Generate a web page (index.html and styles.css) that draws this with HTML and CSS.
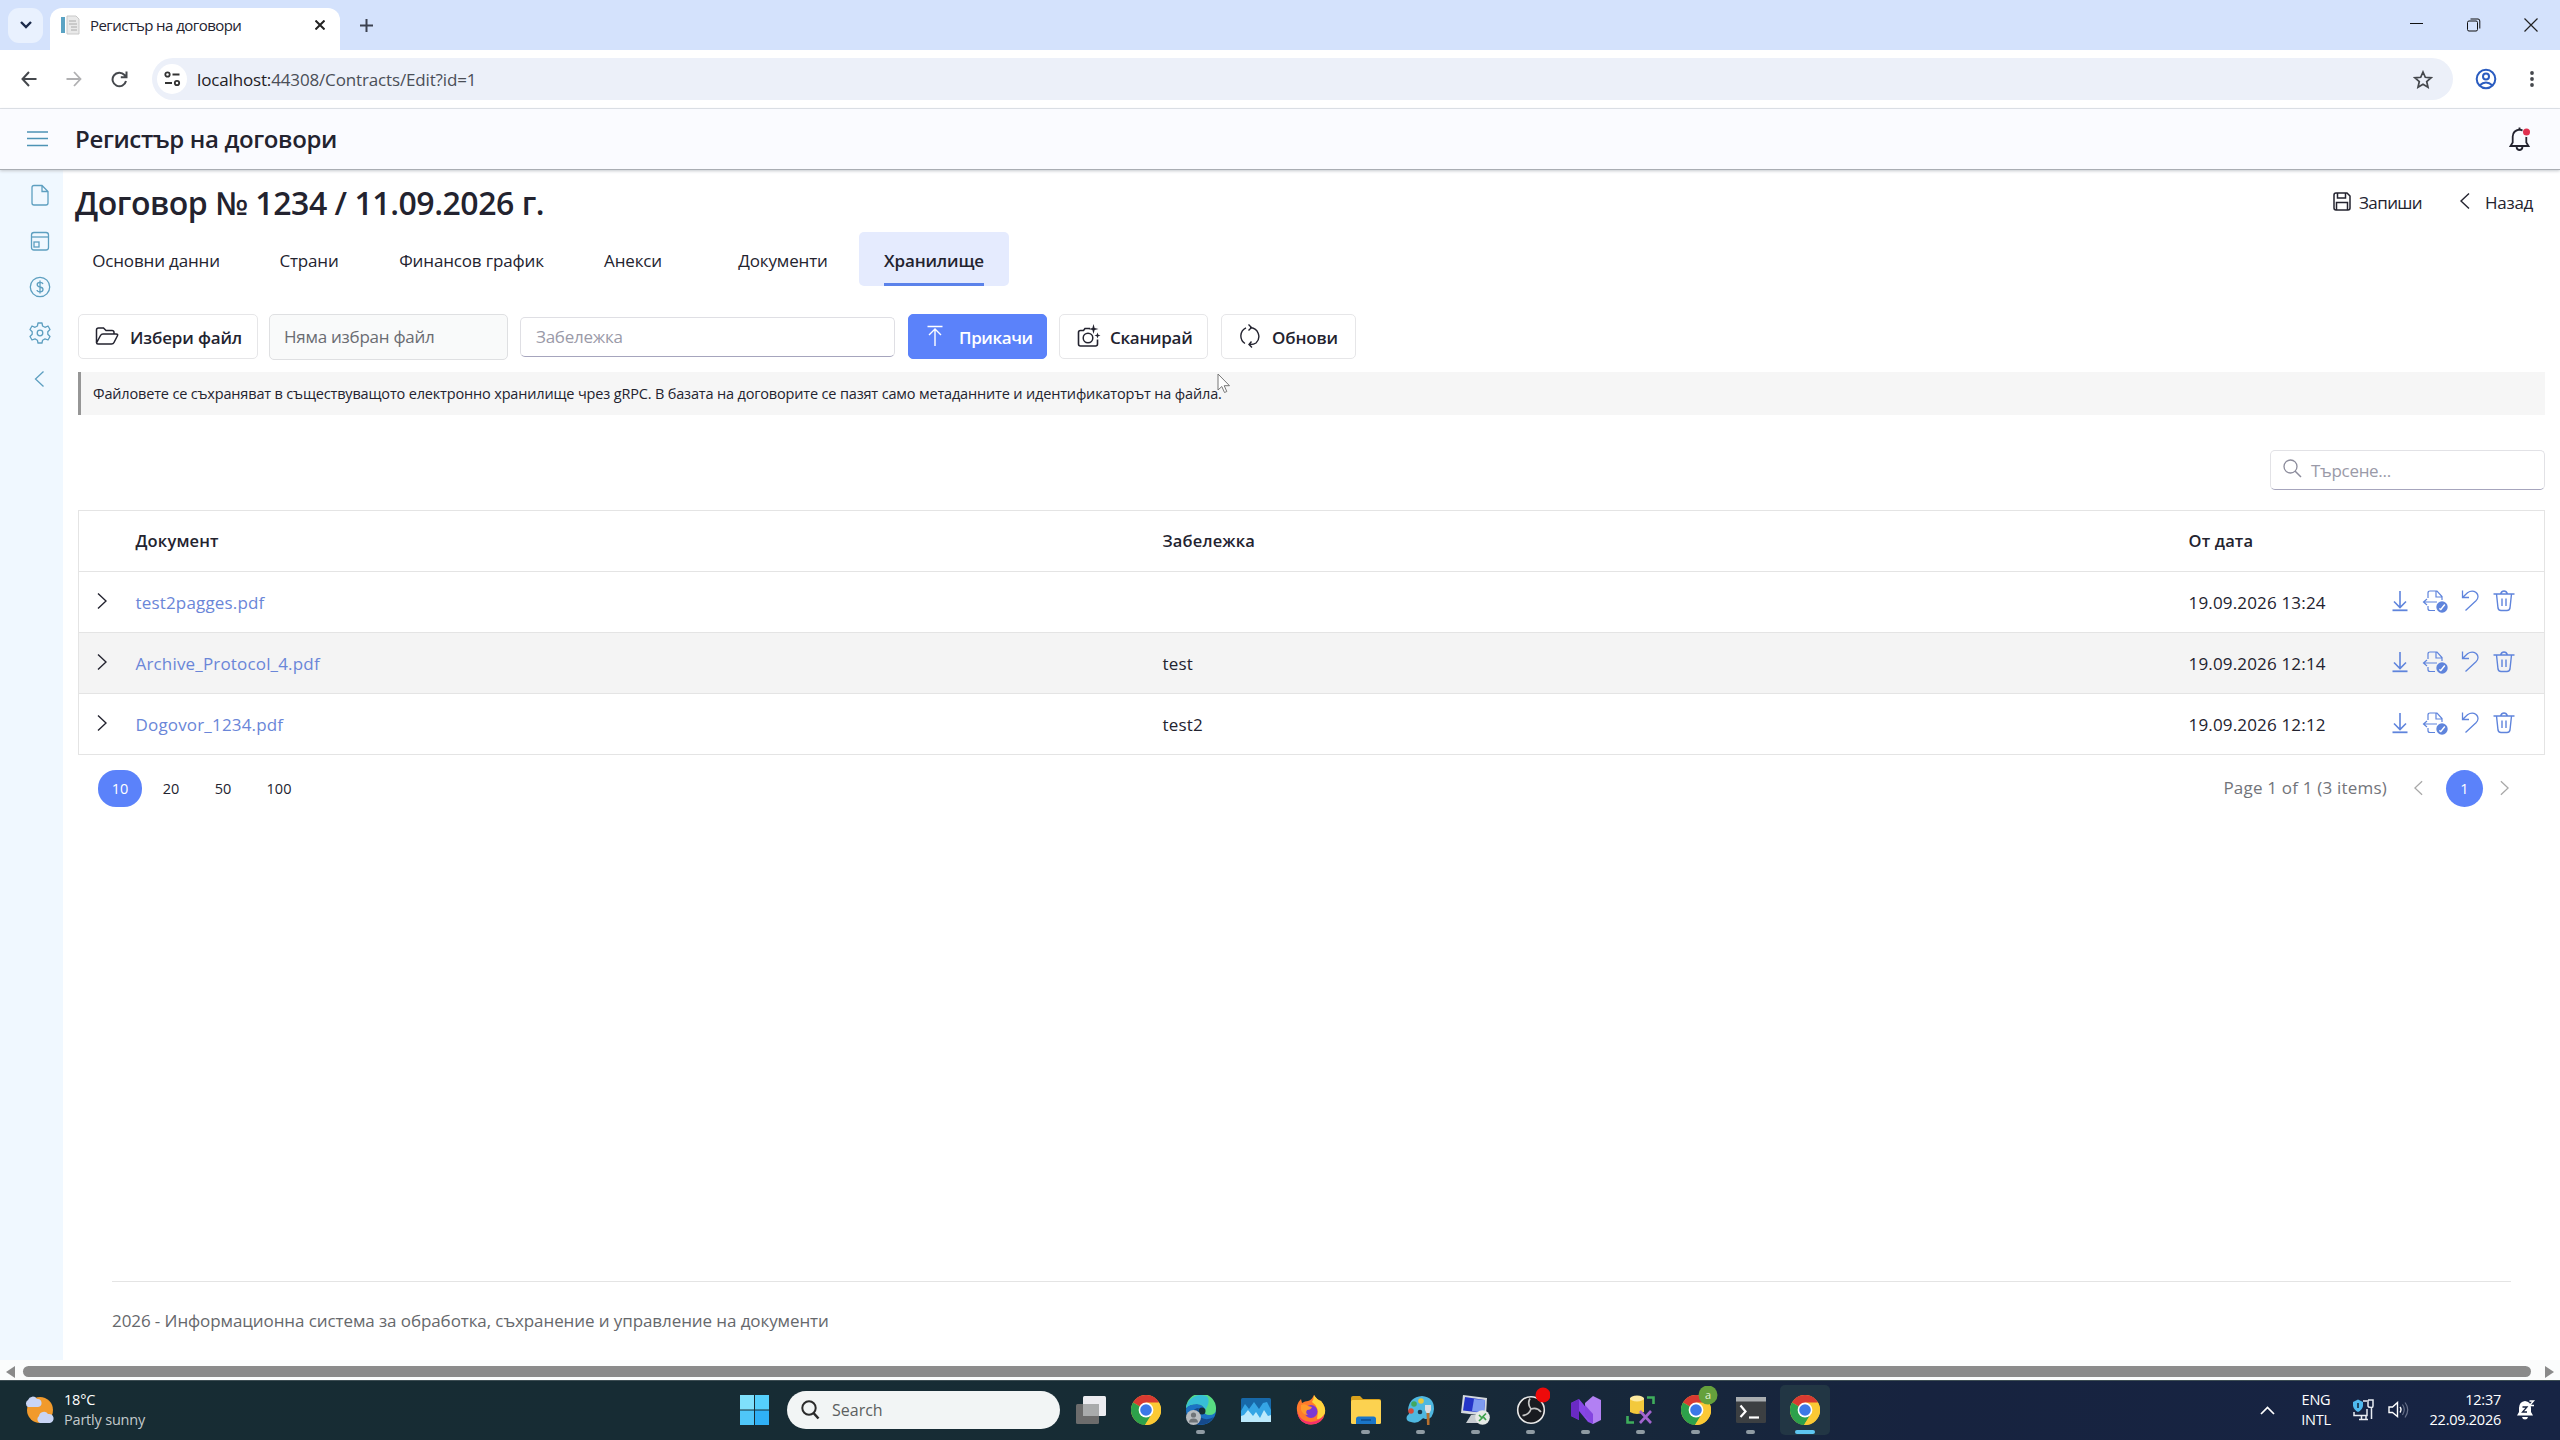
FILE: index.html
```html
<!DOCTYPE html>
<html lang="bg">
    <head>
        <meta charset="utf-8">
        <title>Регистър на договори</title>
        <link rel="stylesheet" href="styles.css">
    </head>
    <body>
        <!-- shared icons -->
        <svg class="sprite">
            <symbol id="i-chrome" viewBox="0 0 30 30">
                <circle cx="15" cy="15" r="15" fill="#fbc934"/>
                <path d="M15 15 L2 7.5 A15 15 0 0 1 28 7.5 Z" fill="#d93a31"/>
                <path d="M15 15 L2 7.5 A15 15 0 0 0 14 30 L21 18.5 Z" fill="#2da14b"/>
                <path d="M15 7.5 H28 A15 15 0 0 1 14 30 L21.5 18.5 Z" fill="#fbc934"/>
                <circle cx="15" cy="15" r="7.4" fill="#fff"/>
                <circle cx="15" cy="15" r="5.8" fill="#3b78e7"/>
            </symbol>
            <symbol id="i-down" viewBox="0 0 24 24">
                <path d="M12 2 V18 M6 12.5 L12 18.5 L18 12.5" fill="none" stroke="currentColor" stroke-width="1.6"/>
                <path d="M4.5 21.3 H19.5" stroke="currentColor" stroke-width="1.8"/>
            </symbol>
            <symbol id="i-sign" viewBox="0 0 26 24">
                <path d="M6 9 V4 Q6 2 8 2 H15 L20 7.5 V11 M14 2 V8 H20 M6 17 V19.500 Q6 21.500 8 21.500 H13 M1.500 13 H15 M5 10 L1.500 13 L5 16" fill="none" stroke="currentColor" stroke-width="1.200"/>
                <circle cx="20" cy="18" r="5.700" fill="currentColor"/>
                <path d="M17.300 19.500 L18.800 20.500 L22.800 15.500" fill="none" stroke="#fff" stroke-width="1.400"/>
            </symbol>
            <symbol id="i-undo" viewBox="0 0 24 24">
                <path d="M4.500 1.500 V8.500 H11 M4.500 8.500 L9.500 3.700 Q12.500 1.500 16 2.300 Q20 3.800 20 7.800 Q19.800 10 18 11.800 L7.500 21.500" fill="none" stroke="currentColor" stroke-width="1.300"/>
            </symbol>
            <symbol id="i-trash" viewBox="0 0 24 24">
                <path d="M1.500 5 H22.500 M8.500 5 Q9.500 2 12 2 Q14.500 2 15.500 5 M4.500 5 L6 19 Q6.500 21.500 9 21.500 H15 Q17.500 21.500 18 19 L19.500 5 M10 9.500 V17 M14 9.500 V17" fill="none" stroke="currentColor" stroke-width="1.400"/>
            </symbol>
            <symbol id="i-right" viewBox="0 0 10 16">
                <path d="M1 0.500 L9 8 L1 15.500" fill="none" stroke="currentColor" stroke-width="1.400"/>
            </symbol>
            <symbol id="i-left" viewBox="0 0 10 16">
                <path d="M9 0.500 L1 8 L9 15.500" fill="none" stroke="currentColor" stroke-width="1.400"/>
            </symbol>
        </svg>

        <div class="tabstrip">
            <div class="tab-search">
                <svg width="12" height="8" viewBox="0 0 12 8"><path d="M1 1 L6 6 L11 1" fill="none" stroke="#1b2a4a" stroke-width="2.4"/></svg>
            </div>
            <div class="browser-tab">
                <svg width="19" height="20" viewBox="0 0 19 20">
                    <path d="M0 2 H4 V18 H0 Z" fill="#5aa3c4"/>
                    <path d="M6 1 H15 L18 4 V19 H6 Z" fill="#e9e9e9" stroke="#c9c9c9"/>
                    <path d="M8 6 H15 M8 9 H16 M10 12 H16 M10 15 H16" stroke="#aaa"/>
                </svg>
                <span class="browser-tab-title">Регистър на договори</span>
                <svg class="tab-close" width="10" height="10" viewBox="0 0 10 10"><path d="M0.500 0.500 L9.500 9.500 M9.500 0.500 L0.500 9.500" stroke="#222" stroke-width="2"/></svg>
            </div>
            <svg class="new-tab" width="13" height="13" viewBox="0 0 13 13"><path d="M6.500 0 V13 M0 6.500 H13" stroke="#3c4250" stroke-width="2"/></svg>
            <div class="window-buttons">
                <svg width="14" height="14" viewBox="0 0 14 14"><path d="M0 5.500 H13" stroke="#111"/></svg>
                <svg width="14" height="14" viewBox="0 0 14 14"><rect x="0.500" y="3" width="10" height="10" rx="1.500" fill="none" stroke="#111"/><path d="M3.500 1 H11 Q12.800 1 12.800 3 V10.500" fill="none" stroke="#111"/></svg>
                <svg width="14" height="14" viewBox="0 0 14 14"><path d="M0.500 0.500 L13.500 13.500 M13.500 0.500 L0.500 13.500" stroke="#222" stroke-width="1.200"/></svg>
            </div>
        </div>

        <div class="addressbar">
            <div class="nav-buttons">
                <svg width="16" height="16" viewBox="0 0 16 16"><path d="M15.500 8 H1.500 M8 1 L1.500 8 L8 15" fill="none" stroke="#45484d" stroke-width="2"/></svg>
                <svg width="16" height="16" viewBox="0 0 16 16"><path d="M0.500 8 H14.500 M8 1 L14.500 8 L8 15" fill="none" stroke="#b0b0b2" stroke-width="1.800"/></svg>
                <svg width="17" height="17" viewBox="0 0 17 17"><path d="M15 10 A6.800 6.800 0 1 1 13.500 4 L15.500 6 M15.500 0.500 V6.300 H9.800" fill="none" stroke="#45484d" stroke-width="2"/></svg>
            </div>
            <div class="omnibox">
                <div class="site-info">
                    <svg width="17" height="16" viewBox="0 0 17 16"><circle cx="3.500" cy="3.500" r="2.200" fill="none" stroke="#333" stroke-width="1.800"/><path d="M8.500 3.500 H15.500 M1 12 H8" stroke="#333" stroke-width="2"/><circle cx="13" cy="12" r="2.200" fill="none" stroke="#333" stroke-width="1.800"/></svg>
                </div>
                <span class="url"><span class="url-host">localhost:</span>44308/Contracts/Edit?id=1</span>
                <svg class="star" width="20" height="19" viewBox="0 0 20 19"><path d="M10 2 L12.300 7.300 L18 7.800 L13.700 11.500 L15 17.200 L10 14.200 L5 17.200 L6.300 11.500 L2 7.800 L7.700 7.300 Z" fill="none" stroke="#45484d" stroke-width="1.700"/></svg>
            </div>
            <svg class="account" width="22" height="22" viewBox="0 0 22 22"><circle cx="11" cy="11" r="9.300" fill="none" stroke="#2a5cc0" stroke-width="2"/><circle cx="11" cy="8.500" r="3" fill="none" stroke="#2a5cc0" stroke-width="2"/><path d="M4.500 17.500 Q11 11.500 17.500 17.500" fill="none" stroke="#2a5cc0" stroke-width="2"/></svg>
            <svg width="4" height="16" viewBox="0 0 4 16"><circle cx="2" cy="2" r="1.900" fill="#45484d"/><circle cx="2" cy="8" r="1.900" fill="#45484d"/><circle cx="2" cy="14" r="1.900" fill="#45484d"/></svg>
        </div>

        <header class="app-header">
            <svg width="21" height="16" viewBox="0 0 21 16"><path d="M0 1 H21 M0 7.500 H21 M0 14.500 H21" stroke="#4d93b5" stroke-width="1.500"/></svg>
            <span class="app-title">Регистър на договори</span>
            <svg class="bell" width="22" height="25" viewBox="0 0 22 25">
                <path d="M1.500 19 H19.500 L17.300 15.500 V9.500 Q17 3.500 10.500 2.500 Q4 3.500 3.700 9.500 V15.500 Z M7.500 20 Q8 23 10.500 23 Q13 23 13.500 20 M10.500 0.500 V3" fill="none" stroke="#23232f" stroke-width="1.800"/>
                <circle cx="17.500" cy="5.500" r="4.500" fill="#fafbff"/>
                <circle cx="17.500" cy="5" r="3.500" fill="#e0304e"/>
            </svg>
        </header>

        <div class="app-body">
            <nav class="sidebar">
                <svg width="24" height="24" viewBox="0 0 24 24"><path d="M6 2.500 H14 L20 8.500 V20 Q20 22 18 22 H6 Q4 22 4 20 V4.500 Q4 2.500 6 2.500 Z M14 2.500 V8.500 H20"/></svg>
                <svg width="24" height="24" viewBox="0 0 24 24"><rect x="3.500" y="3.500" width="17" height="17.500" rx="2.500"/><path d="M3.500 8 H20.500"/><rect x="6" y="13" width="5" height="5"/></svg>
                <svg width="24" height="24" viewBox="0 0 24 24"><circle cx="12" cy="12" r="9.700"/><path d="M12 5.500 V18.500 M15 9 Q14.500 7.300 12 7.300 Q9.200 7.300 9.200 9.500 Q9.200 11.500 12 12 Q15 12.500 15 14.500 Q15 16.800 12 16.800 Q9.300 16.800 9 15"/></svg>
                <svg width="24" height="24" viewBox="0 0 24 24"><path d="M10 2 H14 L14.600 5 L17 6.300 L20 5 L22 8.500 L19.800 10.700 V13.300 L22 15.500 L20 19 L17 17.900 L14.600 19.200 L14 22 H10 L9.400 19.200 L7 17.900 L4 19 L2 15.500 L4.200 13.300 V10.700 L2 8.500 L4 5 L7 6.300 L9.400 5 Z" stroke-linejoin="round"/><circle cx="12" cy="12" r="2.800"/></svg>
                <svg width="24" height="24" viewBox="0 0 24 24"><path d="M15.500 4.500 L7.500 12 L15.500 19.500"/></svg>
            </nav>

            <main class="content">
                <div class="title-row">
                    <h1>Договор № 1234 / 11.09.2026 г.</h1>
                    <div class="title-actions">
                        <svg width="18" height="19" viewBox="0 0 18 19"><path d="M1 3 Q1 1 3 1 H14 L17 4 V16 Q17 18 15 18 H3 Q1 18 1 16 Z M4.500 1 V6 H12.500 V1 M3.500 18 V10.500 H14.500 V18" fill="none" stroke="#23232f" stroke-width="1.500"/></svg>
                        <span class="save">Запиши</span>
                        <svg class="back-icon" width="10" height="16"><use href="#i-left"/></svg>
                        <span class="back">Назад</span>
                    </div>
                </div>

                <div class="tabs">
                    <div class="tab tab-main">Основни данни</div>
                    <div class="tab tab-parties">Страни</div>
                    <div class="tab tab-finance">Финансов график</div>
                    <div class="tab tab-annex">Анекси</div>
                    <div class="tab tab-docs">Документи</div>
                    <div class="tab active"><span>Хранилище</span></div>
                </div>

                <div class="toolbar">
                    <div class="btn btn-choose">
                        <svg width="24" height="20" viewBox="0 0 24 20"><path d="M1.500 17 V4 Q1.500 2 3.500 2 H8.500 L11 4.500 H17 Q19 4.500 19 6.500 V8 M1.500 17 L5.500 9.500 Q6.300 8 8 8 H21 Q23.500 8 22.300 10 L19 16.500 Q18.300 18 16.500 18 H3 Q1.500 18 1.500 16.500" fill="none" stroke="currentColor" stroke-width="1.500"/></svg>
                        <span>Избери файл</span>
                    </div>
                    <div class="file-name">Няма избран файл</div>
                    <div class="note-input">Забележка</div>
                    <div class="btn btn-primary">
                        <svg width="16" height="22" viewBox="0 0 16 22"><path d="M0.500 1.500 H15.500 M8 21 V4 M2 10 L8 4 L14 10" fill="none" stroke="currentColor" stroke-width="1.400"/></svg>
                        <span>Прикачи</span>
                    </div>
                    <div class="btn btn-scan">
                        <svg width="24" height="24" viewBox="0 0 24 24"><path d="M13 4.500 H8 L6.500 6.500 H3.500 Q1.500 6.500 1.500 8.500 V20 Q1.500 22 3.500 22 H18.500 Q20.500 22 20.500 20 V15.500" fill="none" stroke="currentColor" stroke-width="1.600"/><circle cx="11" cy="14" r="4.800" fill="none" stroke="currentColor" stroke-width="1.500"/><path d="M16.500 0 L17.600 3.900 L21.500 5 L17.600 6.100 L16.500 10 L15.400 6.100 L11.500 5 L15.400 3.900 Z M20.500 8.500 L21.300 10.700 L23.500 11.500 L21.300 12.300 L20.500 14.500 L19.700 12.300 L17.500 11.500 L19.700 10.700 Z" fill="currentColor"/></svg>
                        <span>Сканирай</span>
                    </div>
                    <div class="btn btn-refresh">
                        <svg width="22" height="24" viewBox="0 0 22 24"><path d="M7 3.800 A9 9 0 0 0 6 19.500 M11 3.500 A9 9 0 0 1 17 19 M11 3.500 H12 M9.500 0.500 L12.500 3.500 L9.500 6.500 M12.500 17.500 L10 20.500 L13 23.500 M10 20.500 Q14.500 20.800 17 19" fill="none" stroke="currentColor" stroke-width="1.400"/></svg>
                        <span>Обнови</span>
                    </div>
                </div>

                <div class="notice"><span>Файловете се съхраняват в съществуващото електронно хранилище чрез gRPC. В базата на договорите се пазят само метаданните и идентификаторът на файла.</span></div>

                <div class="search-row">
                    <div class="search-box">
                        <svg width="19" height="19" viewBox="0 0 19 19"><circle cx="7.500" cy="7.500" r="6.500" fill="none" stroke="#8c8c9c" stroke-width="1.300"/><path d="M12 12 L18 18" stroke="#8c8c9c" stroke-width="1.500"/></svg>
                        <span>Търсене...</span>
                    </div>
                </div>

                <table class="grid">
                    <colgroup>
                        <col class="col-expand">
                        <col class="col-doc">
                        <col class="col-note">
                        <col class="col-date">
                        <col>
                    </colgroup>
                    <tr>
                        <th></th>
                        <th>Документ</th>
                        <th>Забележка</th>
                        <th>От дата</th>
                        <th></th>
                    </tr>
                    <tr>
                        <td class="expand"><svg width="10" height="16"><use href="#i-right"/></svg></td>
                        <td><a>test2pagges.pdf</a></td>
                        <td></td>
                        <td>19.09.2026 13:24</td>
                        <td>
                            <div class="row-actions">
                                <svg width="24" height="24"><use href="#i-down"/></svg>
                                <svg width="26" height="24"><use href="#i-sign"/></svg>
                                <svg width="24" height="24"><use href="#i-undo"/></svg>
                                <svg width="24" height="24"><use href="#i-trash"/></svg>
                            </div>
                        </td>
                    </tr>
                    <tr class="alt">
                        <td class="expand"><svg width="10" height="16"><use href="#i-right"/></svg></td>
                        <td><a>Archive_Protocol_4.pdf</a></td>
                        <td>test</td>
                        <td>19.09.2026 12:14</td>
                        <td>
                            <div class="row-actions">
                                <svg width="24" height="24"><use href="#i-down"/></svg>
                                <svg width="26" height="24"><use href="#i-sign"/></svg>
                                <svg width="24" height="24"><use href="#i-undo"/></svg>
                                <svg width="24" height="24"><use href="#i-trash"/></svg>
                            </div>
                        </td>
                    </tr>
                    <tr>
                        <td class="expand"><svg width="10" height="16"><use href="#i-right"/></svg></td>
                        <td><a>Dogovor_1234.pdf</a></td>
                        <td>test2</td>
                        <td>19.09.2026 12:12</td>
                        <td>
                            <div class="row-actions">
                                <svg width="24" height="24"><use href="#i-down"/></svg>
                                <svg width="26" height="24"><use href="#i-sign"/></svg>
                                <svg width="24" height="24"><use href="#i-undo"/></svg>
                                <svg width="24" height="24"><use href="#i-trash"/></svg>
                            </div>
                        </td>
                    </tr>
                </table>

                <div class="pager">
                    <span class="size selected">10</span>
                    <span class="size">20</span>
                    <span class="size">50</span>
                    <span class="size size-wide">100</span>
                    <span class="page-info">Page 1 of 1 (3 items)</span>
                    <svg class="pager-arrow" width="9" height="16"><use href="#i-left"/></svg>
                    <span class="page-number">1</span>
                    <svg class="pager-arrow" width="9" height="16"><use href="#i-right"/></svg>
                </div>

                <footer class="footer"><span>2026 - Информационна система за обработка, съхранение и управление на документи</span></footer>
            </main>
        </div>

        <div class="scrollbar">
            <svg width="9" height="12" viewBox="0 0 9 12"><path d="M9 0 V12 L0 6 Z" fill="#8a8a8a"/></svg>
            <div class="thumb"></div>
            <svg width="9" height="12" viewBox="0 0 9 12"><path d="M0 0 V12 L9 6 Z" fill="#8a8a8a"/></svg>
        </div>

        <div class="taskbar">
            <div class="weather">
                <svg width="31" height="30" viewBox="0 0 31 30">
                    <circle cx="16" cy="15" r="13" fill="#f19a2c"/>
                    <path d="M4 12 A4 4 0 0 1 4 5 A5 5 0 0 1 13 4 A4 4 0 0 1 14 12 Z" fill="#c9d5f5"/>
                    <path d="M16 28 A4 4 0 0 1 15 21 A5 5 0 0 1 24 19 A4.500 4.500 0 0 1 26 28 Z" fill="#c9d5f5"/>
                </svg>
                <div class="weather-text">
                    <div>18°C</div>
                    <div class="dim">Partly sunny</div>
                </div>
            </div>
            <svg class="start" width="29" height="30" viewBox="0 0 29 30">
                <rect x="0" y="0" width="14" height="14.500" fill="#7fe0fb"/>
                <rect x="15" y="0" width="14" height="14.500" fill="#55cffb"/>
                <rect x="0" y="15.500" width="14" height="14.500" fill="#4fc6f8"/>
                <rect x="15" y="15.500" width="14" height="14.500" fill="#2fb0f5"/>
            </svg>
            <div class="task-search">
                <svg width="19" height="20" viewBox="0 0 19 20"><circle cx="8" cy="8" r="6.700" fill="none" stroke="#2b2b2b" stroke-width="2"/><path d="M12.500 13 L17.500 18.500" stroke="#2b2b2b" stroke-width="2.600"/></svg>
                <span>Search</span>
            </div>
            <div class="apps">
                <div class="app">
                    <svg width="30" height="30" viewBox="0 0 30 30"><rect x="7" y="1" width="23" height="20" rx="1.500" fill="#ececf0"/><rect x="0" y="9" width="23" height="20" rx="1.500" fill="#6c6c6c"/><rect x="7" y="9" width="16" height="12" fill="#a9abac"/></svg>
                </div>
                <div class="app"><svg width="30" height="30"><use href="#i-chrome"/></svg></div>
                <div class="app running">
                    <svg width="30" height="30" viewBox="0 0 30 30">
                        <circle cx="15" cy="15" r="15" fill="#1c73c4"/>
                        <path d="M0 13 A15 15 0 0 1 30 14 Q30 20 23 20 Q17 19.500 19 15.500 Q18 9 11 9 Q3 9 0 13 Z" fill="#58dc82"/>
                        <path d="M0 13 A15 15 0 0 1 21 1.300 Q25 7 19 15 Q18 9 11 9 Q3 9 0 13 Z" fill="#37bfd6"/>
                        <path d="M13 13 Q10 19 15 22.500 Q21 26 28 22 Q22 31 12 29.500 Q5 26 6 18 Q8 13 13 13 Z" fill="#154a8c"/>
                        <circle cx="16" cy="16" r="3.500" fill="#162c36"/>
                        <circle cx="7.500" cy="22.500" r="7.500" fill="#b7bcc0"/>
                        <circle cx="7.500" cy="20" r="2.600" fill="#6f7478"/><path d="M3 27.500 Q3 23.500 7.500 23.500 Q12 23.500 12 27.500 Z" fill="#6f7478"/>
                    </svg>
                </div>
                <div class="app">
                    <svg width="30" height="24" viewBox="0 0 30 24"><rect width="30" height="24" rx="1.500" fill="#1768a8"/><path d="M0 13 L4 6 L8 11 L13 4 L18 11 L22 5 L26 4 L30 12 V24 H0 Z" fill="#35a5e5"/><path d="M0 18 L3 17 L7 12 L12 18 L15 14 L19 20 L23 12 L27 18 L30 17 V24 H0 Z" fill="#bce9fb"/></svg>
                </div>
                <div class="app">
                    <svg width="30" height="30" viewBox="0 0 30 30"><path d="M1 16 Q0 9 5 4 L6 8 Q9 6 12 6 Q16 5 18 0 Q21 5 25 6 Q30 12 29 18 Q27 29 15 29.500 Q3 29 1 16 Z" fill="#ff7a2c"/><path d="M18 0 Q21 5 25 6 Q30 12 29 18 Q26 24 21 24 Q24 12 16 7 Q18 4 18 0 Z" fill="#ffd53d"/><path d="M1 16 Q4 27 15 27 Q24 26 28 20 Q26 29 15 29.500 Q3 29 1 16 Z" fill="#f5306b"/><circle cx="15" cy="16.500" r="6.500" fill="#7b3ad4"/><path d="M5 10 Q9 8 12 11 L16 12 Q15 15 11 15 Q9 18 12 20 Q7 20 5 15 Z" fill="#ff9a2c"/></svg>
                </div>
                <div class="app running">
                    <svg width="30" height="28" viewBox="0 0 30 28"><path d="M0 2 Q0 0 2 0 H9 L12 3 H28 Q30 3 30 5 V12 H0 Z" fill="#d9a11c"/><rect y="4" width="30" height="24" rx="1.500" fill="#fcd250"/><path d="M5 28 V23 Q5 20.500 7.500 20.500 H22.500 Q25 20.500 25 23 V28 Z" fill="#1a76c8"/><path d="M10 24 H20" stroke="#0e4d8c" stroke-width="1.500"/></svg>
                </div>
                <div class="app running">
                    <svg width="29" height="30" viewBox="0 0 29 30"><path d="M1 21 Q-1 26 5 27 Q11 29 15 25 Q17 22 19 24 Q27 25 28 14 Q28 2 16 1 Q3 2 2 15 Q5 18 1 21 Z" fill="#4fb8e0"/><circle cx="8" cy="9" r="2.800" fill="#41a85f"/><circle cx="15" cy="6" r="2.800" fill="#e9c93b"/><circle cx="5" cy="16" r="2.800" fill="#d54a3a"/><circle cx="14" cy="17" r="2.300" fill="#1a3a50"/><path d="M19 10 H25 V15 L23.500 18 H20.500 L19 15 Z" fill="#dadde0"/><path d="M20.500 18 H23.500 V30 H21 Z" fill="#b5702f"/></svg>
                </div>
                <div class="app running">
                    <svg width="29" height="30" viewBox="0 0 29 30"><path d="M2 0 L26 3 L25 21 L0 18 Z" fill="#d3d8de"/><path d="M4 2 L24 5 L23 18 L2 15.500 Z" fill="#2434c8"/><path d="M13 4 L24 5 L23 18 L11 16 Z" fill="#7d9bf0"/><path d="M10 20 H17 L19 28 H5 Z" fill="#c7ccd1"/><circle cx="21.500" cy="22.500" r="7.300" fill="#e6e9e6"/><path d="M18 20 L21 23 L18 26 M25 18.500 L22 21.500 L25 25" fill="none" stroke="#3fa34d" stroke-width="1.700"/></svg>
                </div>
                <div class="app running">
                    <svg class="obs" width="34" height="38" viewBox="0 0 34 38"><circle cx="15" cy="23" r="13.300" fill="#191b20" stroke="#e8e8e8" stroke-width="1.600"/><path d="M15 22 Q11 17 14 11.500 M15 22 Q21 20 25 25 M15 22 Q13 28 6.500 28.500" fill="none" stroke="#c4c4c4" stroke-width="1.700"/><circle cx="27" cy="8" r="7.500" fill="#ee0a0a"/></svg>
                </div>
                <div class="app running">
                    <svg width="30" height="28" viewBox="0 0 30 28"><path d="M0 7 L8 3 L22 20 V28 L17 26 L8 15 V24 L0 20 Z" fill="#8746e6"/><path d="M0 7 L8 3 V24 L0 20 Z" fill="#6a2ac4"/><path d="M22 0 L30 4 V24 L22 28 L14 21 V7 Z" fill="#b280f3"/><path d="M14 9 L22 18 V28 L14 21 Z" fill="#8444e0"/></svg>
                </div>
                <div class="app running">
                    <svg width="30" height="30" viewBox="0 0 30 30"><path d="M4 3 V17 Q11 21 18 17 V3 Z" fill="#f3c93c"/><ellipse cx="11" cy="3.500" rx="7" ry="3" fill="#fdeaa0"/><path d="M21 2.500 H27.500 V9" fill="none" stroke="#3fae5c" stroke-width="2.600"/><path d="M1.500 21 V27.500 H8" fill="none" stroke="#3fae5c" stroke-width="2.600"/><path d="M14 16 L25 28 M25 16 L14 28" stroke="#a264cf" stroke-width="2.600"/></svg>
                </div>
                <div class="app running">
                    <svg class="chrome-badge" width="42" height="42" viewBox="0 0 42 42"><use href="#i-chrome" x="4" y="9" width="30" height="30"/><circle cx="31" cy="9" r="9.500" fill="#65a03c"/><text x="31" y="13" text-anchor="middle" font-size="11" fill="#e2f0d6">a</text></svg>
                </div>
                <div class="app running">
                    <svg width="30" height="26" viewBox="0 0 30 26"><rect width="30" height="26" rx="1.500" fill="#3c3f42"/><path d="M0 0 H30 V4.500 H0 Z" fill="#a9adb0"/><path d="M4.500 8.500 L9.500 14.500 L4.500 20" fill="none" stroke="#fff" stroke-width="2.200"/><path d="M13 20.500 H23" stroke="#fff" stroke-width="2.200"/></svg>
                </div>
                <div class="app running current"><svg width="30" height="30"><use href="#i-chrome"/></svg></div>
            </div>
            <div class="tray">
                <svg width="15" height="9" viewBox="0 0 15 9"><path d="M1 8 L7.500 1.500 L14 8" fill="none" stroke="#fff" stroke-width="1.700"/></svg>
                <div class="lang"><div>ENG</div><div>INTL</div></div>
                <svg class="net" width="21" height="22" viewBox="0 0 21 22"><path d="M10 2 H14 M1 13 V16.500 H14 V10 M6 20.500 H15 M8.500 16.500 V20 M13 16.500 V20" fill="none" stroke="#e8ecf2" stroke-width="1.500"/><path d="M15 1 H20 V7 Q20 8.500 18.500 8.500 V20 M15 1 V7 Q15 8.500 18.500 8.500" fill="none" stroke="#e8ecf2" stroke-width="1.500"/><path d="M0 3 L5 0.500 L10 3 V7 Q9 11 5 13 Q1 11 0 7 Z" fill="#4fb9ee"/><path d="M5 4 V9" stroke="#123" stroke-width="1.500"/></svg>
                <svg class="sound" width="21" height="18" viewBox="0 0 21 18"><path d="M1 6 H4.500 L9.500 1.500 V15.500 L4.500 11.500 H1 Z M12 6 Q14 8.500 12 11.500" fill="none" stroke="#fff" stroke-width="1.400"/><path d="M14.500 3.500 Q18 8.500 14.500 14 M17 1.500 Q22.500 8.500 17 16.500" fill="none" stroke="#68718a" stroke-width="1.200"/></svg>
                <div class="clock"><div>12:37</div><div>22.09.2026</div></div>
                <svg class="dnd" width="19" height="20" viewBox="0 0 19 20"><path d="M8 1 Q14 1.500 14 8 V12 L16 15.500 H0 L2 12 V8 Q2.300 1.500 8 1 Z M5 17 H11 Q10.500 19.500 8 19.500 Q5.500 19.500 5 17 Z" fill="#fff"/><path d="M5.500 7 H10 L5.500 12 H10" fill="none" stroke="#17233f" stroke-width="1.300"/><path d="M12.500 1 H16.500 L12.500 5.500 H17" fill="none" stroke="#fff" stroke-width="1.400"/></svg>
            </div>
        </div>

        <svg class="cursor" width="14" height="21" viewBox="0 0 14 21"><path d="M1 1 V17 L4.800 13.500 L7.500 19.500 L9.800 18.500 L7.200 12.700 H12.500 Z" fill="#fff" stroke="#777" stroke-width="1"/></svg>
    </body>
</html>
```
FILE: styles.css
```css
* {
    box-sizing: border-box;
}

body {
    margin: 0;
    width: 2560px;
    height: 1440px;
    overflow: hidden;
    display: flex;
    flex-direction: column;
    background: #fff;
    color: #23232f;
    font-family: "Open Sans", "Noto Sans", sans-serif;
    font-size: 17px;
    line-height: 24px;
    white-space: nowrap;
}

svg {
    display: block;
    flex: none;
}

.sprite {
    position: absolute;
    width: 0;
    height: 0;
}

/* browser */
.tabstrip {
    height: 50px;
    flex: none;
    display: flex;
    align-items: center;
    padding-left: 8px;
    background: #d4e2fc;
}

.tab-search {
    width: 35px;
    height: 35px;
    border-radius: 11px;
    background: #e9f1fe;
    display: flex;
    align-items: center;
    justify-content: center;
}

.browser-tab {
    align-self: flex-end;
    width: 290px;
    height: 42px;
    margin-left: 7px;
    padding: 0 15px 8px 11px;
    border-radius: 12px 12px 0 0;
    background: #fff;
    display: flex;
    align-items: center;
}

.browser-tab-title {
    margin-left: 10px;
    font-size: 15px;
    letter-spacing: -0.55px;
}

.tab-close {
    margin-left: auto;
}

.new-tab {
    margin-left: 20px;
}

.window-buttons {
    margin-left: auto;
    padding-right: 22px;
    display: flex;
    gap: 43px;
}

.addressbar {
    height: 59px;
    flex: none;
    display: flex;
    align-items: center;
    padding-right: 26px;
    border-bottom: 1px solid #dfe2e8;
}

.nav-buttons {
    width: 152px;
    padding-left: 21px;
    display: flex;
    align-items: center;
    gap: 29px;
}

.omnibox {
    flex: 1;
    height: 42px;
    border-radius: 21px;
    background: #ecf0f9;
    display: flex;
    align-items: center;
    padding: 0 20px 0 5px;
}

.site-info {
    width: 30px;
    height: 30px;
    border-radius: 50%;
    background: #fff;
    display: flex;
    align-items: center;
    justify-content: center;
}

.url {
    margin-left: 10px;
    padding-top: 1px;
    color: #4a4e57;
    letter-spacing: -0.15px;
}

.url-host {
    color: #1f2024;
}

.star {
    margin-left: auto;
}

.account {
    margin: 0 33px 0 22px;
}

/* application */
.app-header {
    height: 61px;
    flex: none;
    display: flex;
    align-items: center;
    padding: 0 29px 0 27px;
    background: #fafbff;
    border-bottom: 1px solid #a9adb3;
    box-shadow: 0 1px 3px #c4c8cd;
    position: relative;
}

.app-title {
    margin-left: 27px;
    font-size: 24px;
    font-weight: 600;
    letter-spacing: -0.35px;
}

.bell {
    margin-left: auto;
}

.app-body {
    flex: 1;
    min-height: 0;
    display: flex;
}

.sidebar {
    width: 63px;
    flex: none;
    padding: 13px 0 0 28px;
    display: flex;
    flex-direction: column;
    gap: 22px;
    background: #f0f8ff;
}

.sidebar svg {
    fill: none;
    stroke: #5d9fc0;
    stroke-width: 1.3;
}

.content {
    flex: 1;
    display: flex;
    flex-direction: column;
    padding: 0 15px;
}

.title-row {
    height: 62px;
    display: flex;
    align-items: center;
    justify-content: space-between;
    margin-left: -3px;
    padding-top: 3px;
}

h1 {
    margin: 0;
    font-size: 32px;
    font-weight: 600;
    letter-spacing: -0.45px;
    line-height: 40px;
}

.title-actions {
    display: flex;
    align-items: center;
    padding-right: 12px;
}

.title-actions svg {
    margin-bottom: 3px;
}

.save {
    margin-left: 8px;
    letter-spacing: -0.6px;
}

.title-actions .back-icon {
    margin: 0 15px 3px 38px;
}

.back {
    letter-spacing: -0.3px;
}

.tabs {
    display: flex;
    height: 54px;
}

.tab {
    width: 150px;
    display: flex;
    align-items: center;
    justify-content: center;
    padding-top: 3px;
    letter-spacing: -0.15px;
}

.tab-main {
    width: 156px;
}

.tab-finance {
    width: 175px;
}

.tab-annex {
    width: 148px;
}

.tab-docs {
    width: 152px;
}

.active {
    font-weight: 600;
    background: #e5ebfe;
    border-radius: 5px;
    padding-top: 0;
}

.active span {
    height: 54px;
    line-height: 57px;
    border-bottom: 3px solid #5b82ea;
}

.toolbar {
    display: flex;
    align-items: center;
    height: 45px;
    margin-top: 28px;
}

.btn {
    height: 45px;
    display: flex;
    align-items: center;
    border: 1px solid #e6e6e8;
    border-radius: 5px;
    font-weight: 600;
    letter-spacing: -0.15px;
}

.btn svg {
    margin-bottom: 2px;
}

.btn span {
    padding-top: 2px;
}

.btn-choose {
    width: 180px;
    padding-left: 16px;
    gap: 11px;
}

.file-name {
    width: 239px;
    height: 46px;
    margin: 1px 11px 0 11px;
    padding: 10px 14px;
    border: 1px solid #dfe0e2;
    border-radius: 5px;
    background: #f9fafa;
    color: #6a6c72;
    letter-spacing: -0.25px;
}

.note-input {
    width: 375px;
    height: 40px;
    margin: 0 13px 0 1px;
    padding: 7px 15px;
    border: 1px solid #dfdfe4;
    border-bottom-color: #a6a5bd;
    border-radius: 5px;
    color: #9a9aa8;
    letter-spacing: -0.25px;
}

.btn-primary {
    width: 139px;
    padding-left: 18px;
    gap: 16px;
    background: #5b82fa;
    border-color: #5b82fa;
    color: #fff;
    letter-spacing: -0.4px;
}

.btn-scan {
    width: 149px;
    margin: 0 13px 0 12px;
    padding-left: 17px;
    gap: 9px;
    letter-spacing: -0.3px;
}

.btn-refresh {
    width: 135px;
    padding-left: 17px;
    gap: 11px;
}

.notice {
    height: 43px;
    margin-top: 13px;
    padding-left: 12px;
    border-left: 3px solid #969696;
    background: #f6f6f6;
    font-size: 14.5px;
    letter-spacing: -0.165px;
    line-height: 43px;
}

.search-row {
    display: flex;
    justify-content: flex-end;
    margin-top: 35px;
}

.search-box {
    width: 275px;
    height: 40px;
    display: flex;
    align-items: center;
    padding-left: 12px;
    gap: 9px;
    border: 1px solid #e2e2e6;
    border-bottom-color: #a6a5bd;
    border-radius: 5px;
    color: #9a9aa8;
    letter-spacing: -0.3px;
}

.search-box svg {
    margin-bottom: 3px;
}

.search-box span {
    padding-top: 1px;
}

.grid {
    width: 2467px;
    margin-top: 20px;
    table-layout: fixed;
    border-collapse: collapse;
    border: 1px solid #e4e4e4;
    letter-spacing: 0.17px;
}

.grid tr {
    height: 61px;
    border-bottom: 1px solid #e4e4e4;
}

.grid th, .grid td {
    padding: 0;
    text-align: left;
}

.grid td {
    padding-top: 1px;
}

.grid th {
    font-size: 16.5px;
    font-weight: 600;
}

.grid a {
    color: #6a86d8;
}

.alt {
    background: #f4f4f4;
}

.col-expand {
    width: 57px;
}

.col-doc {
    width: 1027px;
}

.col-note {
    width: 1026px;
}

.col-date {
    width: 199px;
}

.expand svg {
    margin: 0 0 4px 18px;
}

.row-actions {
    display: flex;
    gap: 10px;
    margin-bottom: 4px;
    color: #5f84dc;
}

.pager {
    height: 37px;
    margin-top: 15px;
    padding: 0 36px 0 20px;
    display: flex;
    align-items: center;
}

.size {
    width: 52px;
    font-size: 14.5px;
    text-align: center;
}

.selected {
    width: 44px;
    height: 37px;
    margin-right: 3px;
    border-radius: 18px;
    background: #5b82fa;
    color: #fff;
    line-height: 37px;
}

.size-wide {
    width: 60px;
}

.page-info {
    margin-left: auto;
    padding-bottom: 1px;
    color: #72747a;
    letter-spacing: 0.2px;
}

.pager-arrow {
    margin-left: 27px;
    margin-bottom: 2px;
    color: #a8a8a8;
}

.page-number {
    width: 37px;
    height: 37px;
    margin: 0 -10px 0 23px;
    border-radius: 50%;
    background: #5b82fa;
    color: #fff;
    font-size: 14.5px;
    line-height: 37px;
    text-align: center;
}

.footer {
    margin: auto 34px 27px;
    padding-top: 27px;
    border-top: 1px solid #e4e4e4;
    color: #66686c;
    letter-spacing: -0.09px;
}

.scrollbar {
    height: 20px;
    flex: none;
    display: flex;
    align-items: center;
    padding: 3px 6px 0;
    background: #fbfcfc;
}

.thumb {
    flex: 1;
    height: 11px;
    margin: 0 14px 0 8px;
    border-radius: 6px;
    background: #8a8a8a;
}

/* windows taskbar */
.taskbar {
    height: 60px;
    flex: none;
    display: flex;
    align-items: center;
    padding-bottom: 1px;
    background: linear-gradient(90deg, #172c33 0%, #172c35 50%, #17233f 75%, #172444 100%);
    border-top: 1px solid #3d4d53;
    color: #fff;
    font-size: 14.5px;
    line-height: 20px;
}

.weather {
    width: 740px;
    padding-left: 24px;
    display: flex;
    gap: 9px;
    align-items: center;
    letter-spacing: -0.2px;
}

.dim {
    color: #c3cacc;
}

.task-search {
    width: 273px;
    height: 38px;
    margin: 0 3px 0 18px;
    border-radius: 19px;
    background: #f2f5f5;
    color: #5c5f60;
    font-size: 16px;
    display: flex;
    align-items: center;
    padding-left: 14px;
    gap: 12px;
}

.apps {
    display: flex;
}

.app {
    width: 55px;
    height: 50px;
    display: flex;
    align-items: center;
    justify-content: center;
    position: relative;
}

.obs {
    margin: 0 0 8px 4px;
}

.chrome-badge {
    margin: 0 0 6px 4px;
}

.running::after {
    content: "";
    position: absolute;
    bottom: 1px;
    left: 23px;
    width: 9px;
    height: 4px;
    border-radius: 2px;
    background: #8f9ba3;
}

.current {
    width: 50px;
    margin-left: 2px;
    border-radius: 5px;
    background: #223644;
}

.current::after {
    left: 15px;
    width: 20px;
    background: #5ec6f0;
}

.tray {
    margin-left: auto;
    padding-right: 24px;
    display: flex;
    align-items: center;
}

.lang {
    width: 60px;
    margin-left: 11px;
    text-align: center;
    letter-spacing: -0.2px;
}

.net {
    margin-left: 7px;
}

.sound {
    margin-left: 14px;
}

.clock {
    width: 92px;
    text-align: right;
    letter-spacing: -0.25px;
}

.dnd {
    margin-left: 16px;
}

.cursor {
    position: absolute;
    left: 1217px;
    top: 373px;
}
```
